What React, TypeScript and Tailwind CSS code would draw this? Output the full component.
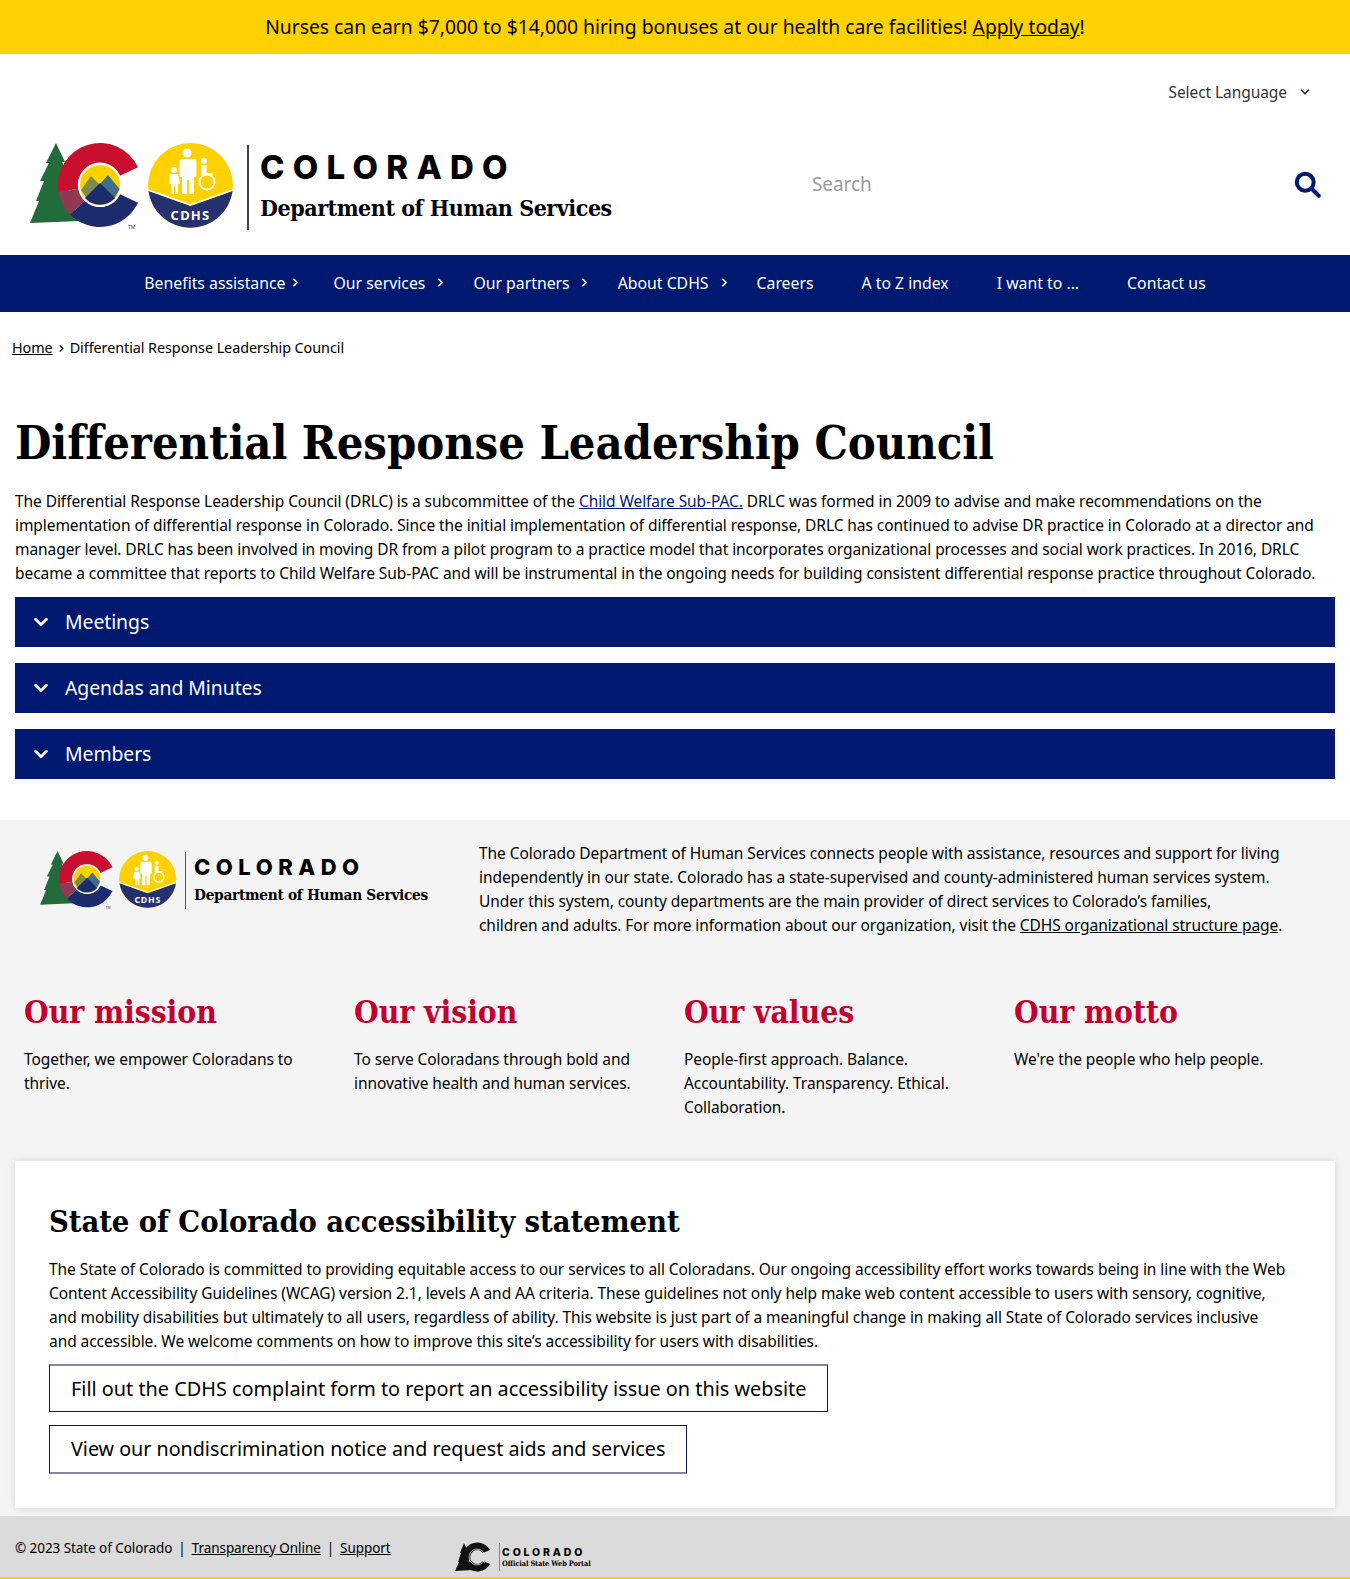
import React from "react";
import { ChevronDown, ChevronRight } from "lucide-react";

const slab = "font-['DejaVu_Serif',serif] [font-stretch:condensed]";

const Mark = ({ className }: { className: string }) => {
  return (
    <svg viewBox="0 0 204 88" className={className}>
      {/* tree */}
      <path d="M26 0 L35 19 L32 19 L40 36 L36 36 L42 60 L50 78 L0 80 L9 58 L6 58 L14 38 L10 38 L19 20 L16 20 Z" fill="#216c3a" />
      {/* C */}
      <path d="M108 24.2 A42 42 0 0 0 28.6 49.3 L48.3 45.8 A22 22 0 0 1 90 32.7 Z" fill="#c8102e" />
      <path d="M28.6 49.3 A42 42 0 0 0 40.3 71.7 L54.4 57.6 A22 22 0 0 1 48.3 45.8 Z" fill="#8f3a52" />
      <path d="M40.3 71.7 A42 42 0 0 0 108 59.8 L90 51.3 A22 22 0 0 1 54.4 57.6 Z" fill="#1c2b6e" />
      {/* mountains */}
      <circle cx="70" cy="42" r="22" fill="#ffffff" />
      <circle cx="70" cy="42" r="20" fill="#ffd100" />
      <path d="M51 47 L61 33 L71 43 L60 60 Z" fill="#7f8a4a" />
      <path d="M70 41 L78 32 L89.5 46 L84 56 Z" fill="#3f6f8d" />
      <path d="M55 55 L70 40 L85 55 A20 20 0 0 1 55 55 Z" fill="#1c2b6e" />
      <text x="98" y="86" fontSize="5" fontFamily="Liberation Sans" fill="#333">TM</text>
      {/* cdhs badge */}
      <circle cx="160.5" cy="42.5" r="42.5" fill="#ffd100" />
      <path d="M118.4 48 L160.5 63 L202.6 48 A42.5 42.5 0 0 1 118.4 48 Z" fill="#25306f" />
      <path d="M118.4 47 L160.5 62 L202.6 47" fill="none" stroke="#ffffff" strokeWidth="1.5" />
      <text x="160.5" y="77" textAnchor="middle" fontSize="13" fontWeight="700" letterSpacing="1.2" fontFamily="Noto Sans" fill="#fff">CDHS</text>
      <g fill="#ffffff">
        <circle cx="157" cy="10" r="4.5" />
        <path d="M150 16 h14 q2.5 0 2.5 3 v15 h-2.5 v17 h-5 v-14 h-2 v14 h-5 v-17 h-2.5 v-15 q0 -3 2.5 -3 Z" />
        <circle cx="144" cy="27" r="3" />
        <path d="M140 31 h8 l2 10 h-2 v10 h-2.5 v-8 h-1.5 v8 h-2.5 v-10 h-2.5 Z" />
        <circle cx="174" cy="18" r="3" />
        <path d="M171 22 h5.5 v8 h6 v2.5 h-11.5 Z" />
      </g>
      <circle cx="177" cy="39" r="7.5" fill="none" stroke="#ffffff" strokeWidth="1.8" />
    </svg>
  );
};

const PortalMark = () => {
  return (
    <svg viewBox="0 0 36 30" className="w-9 h-[30px] shrink-0">
      <path d="M9 1 L13 10 L13 20 L18 28 L0 29 L4 20 L3 20 L6 11 L5 11 Z" fill="#111" />
      <path d="M35 8 A14.5 14.5 0 1 0 35 22 L28 19 A7 7 0 1 1 28 11 Z" fill="#111" />
      <circle cx="22" cy="15" r="8" fill="none" stroke="#dbdbdb" strokeWidth="0.8" />
      <path d="M14 20 L20 11 L30 21 M16 12 L27 22" fill="none" stroke="#dbdbdb" strokeWidth="0.7" />
    </svg>
  );
};

const navItems = [
  { label: "Benefits assistance", arrow: "right-[7px]" },
  { label: "Our services", arrow: "right-[2px]" },
  { label: "Our partners", arrow: "right-[3px]" },
  { label: "About CDHS", arrow: "right-[2px]" },
  { label: "Careers", arrow: "" },
  { label: "A to Z index", arrow: "" },
  { label: "I want to ...", arrow: "" },
  { label: "Contact us", arrow: "" },
];

const values = [
  { title: "Our mission", text: "Together, we empower Coloradans to thrive." },
  { title: "Our vision", text: "To serve Coloradans through bold and innovative health and human services." },
  { title: "Our values", text: "People-first approach. Balance. Accountability. Transparency. Ethical. Collaboration." },
  { title: "Our motto", text: "We're the people who help people." },
];

const App = () => {
  return (
    <div className="w-[1350px] h-[1579px] overflow-hidden bg-white text-black text-[15.5px] tracking-[-0.07px] leading-6 font-['Noto_Sans',sans-serif]">
      {/* alert banner */}
      <div className="h-[54px] bg-[#ffd100] flex items-center justify-center text-[19.3px] tracking-normal">
        <span>
          Nurses can earn $7,000 to $14,000 hiring bonuses at our health care facilities! <a className="underline">Apply today</a>!
        </span>
      </div>

      {/* header */}
      <div className="h-[201px] flex flex-col">
        <div className="flex justify-end items-center pt-[26px] pr-[38px] text-[#333]">
          <span>Select Language</span>
          <ChevronDown size={14} strokeWidth={3} className="ml-[11px]" />
        </div>
        <div className="flex items-center justify-between pt-[39px] pl-[30px] pr-[29px]">
          <div className="flex items-center">
            <Mark className="w-[204px] h-[88px]" />
            <div className="w-[2px] h-[85px] bg-[#444] ml-[13px] mr-[11px]" />
            <div className="flex flex-col mb-[4px]">
              <span className="font-['Inter',sans-serif] font-extrabold text-[33px] leading-[38px] tracking-[0.25em]">COLORADO</span>
              <span className={`${slab} font-bold text-[23px] leading-[30px] mt-[7px] tracking-[-0.02em]`}>Department of Human Services</span>
            </div>
          </div>
          <div className="flex items-center justify-between w-[509px] mb-[6px]">
            <span className="text-[19px] text-[#999]">Search</span>
            <svg viewBox="0 0 24 24" className="w-[27px] h-[27px]" fill="none" stroke="#001970" strokeWidth="3.6" strokeLinecap="round">
              <circle cx="10" cy="10" r="7.5" />
              <path d="M16 16 L22 22" />
            </svg>
          </div>
        </div>
      </div>

      {/* main nav */}
      <nav className="h-[57px] pb-[2px] bg-[#001970] flex items-center justify-center text-white text-[15.8px] tracking-normal">
        {navItems.map((item) => (
          <div key={item.label} className="flex items-center px-6 relative">
            <span>{item.label}</span>
            {item.arrow && <ChevronRight size={13} strokeWidth={3} className={`absolute ${item.arrow}`} />}
          </div>
        ))}
      </nav>

      {/* breadcrumb */}
      <div className="pl-3 pt-[24px] text-[14.4px] flex items-center">
        <a className="underline">Home</a>
        <ChevronRight size={11} strokeWidth={2.5} className="mx-[3px]" />
        <span>Differential Response Leadership Council</span>
      </div>

      {/* content */}
      <div className="px-[15px]">
        <h1 className={`${slab} font-bold text-[46.7px] leading-[56px] mt-[55px] mb-[18px]`}>Differential Response Leadership Council</h1>
        <p className="mb-[12px]">
          The Differential Response Leadership Council (DRLC) is a subcommittee of the <a className="underline text-[#001970]">Child Welfare Sub-PAC.</a> DRLC was formed in 2009 to advise and make recommendations on the implementation of differential response in Colorado. Since the initial implementation of differential response, DRLC has continued to advise DR practice in Colorado at a director and manager level. DRLC has been involved in moving DR from a pilot program to a practice model that incorporates organizational processes and social work practices. In 2016, DRLC became a committee that reports to Child Welfare Sub-PAC and will be instrumental in the ongoing needs for building consistent differential response practice throughout Colorado.
        </p>
        <div className="flex flex-col gap-4">
          {["Meetings", "Agendas and Minutes", "Members"].map((title) => (
            <div key={title} className="h-[50px] bg-[#001970] text-white flex items-center pl-[15px] text-[19.4px]">
              <ChevronDown size={22} strokeWidth={3} className="mr-[13px]" />
              {title}
            </div>
          ))}
        </div>
      </div>

      {/* footer */}
      <div className="mt-[41px] bg-[#f4f4f4] h-[696px] flex flex-col">
        <div className="flex pt-[21px]">
          <div className="w-[479px] shrink-0 flex items-center pl-[40px] h-[68px] mt-[5px]">
            <Mark className="w-[137px] h-[59px]" />
            <div className="w-px h-[57px] bg-[#555] ml-[8px] mr-[8px]" />
            <div className="flex flex-col mb-[2px]">
              <span className="font-['Inter',sans-serif] font-extrabold text-[22px] leading-[26px] tracking-[0.25em]">COLORADO</span>
              <span className={`${slab} font-bold text-[15.3px] leading-[20px] mt-[5px] tracking-[-0.02em]`}>Department of Human Services</span>
            </div>
          </div>
          <p className="w-[806px]">
            The Colorado Department of Human Services connects people with assistance, resources and support for living independently in our state. Colorado has a state-supervised and county-administered human services system. Under this system, county departments are the main provider of direct services to Colorado’s families,<br />children and adults. For more information about our organization, visit the <a className="underline">CDHS organizational structure page</a>.
          </p>
        </div>

        <div className="grid grid-cols-[repeat(4,330px)] px-[24px] mt-[57px]">
          {values.map((v) => (
            <div key={v.title} className="pr-[30px]">
              <h2 className={`${slab} font-bold text-[31.6px] leading-[36px] text-[#c4002f] mb-[17px]`}>{v.title}</h2>
              <p>{v.text}</p>
            </div>
          ))}
        </div>

        <div className="mt-[42px] mx-[15px] h-[347px] bg-white shadow-[0_0_8px_rgba(0,0,0,0.12)] px-[34px] pt-[40px]">
          <h2 className={`${slab} font-bold text-[30.6px] leading-[40px] mb-[16px]`}>State of Colorado accessibility statement</h2>
          <p className="mb-[11px] w-[1239px]">
            The State of Colorado is committed to providing equitable access to our services to all Coloradans. Our ongoing accessibility effort works towards being in line with the Web Content Accessibility Guidelines (WCAG) version 2.1, levels A and AA criteria. These guidelines not only help make web content accessible to users with sensory, cognitive, and mobility disabilities but ultimately to all users, regardless of ability. This website is just part of a meaningful change in making all State of Colorado services inclusive and accessible. We welcome comments on how to improve this site’s accessibility for users with disabilities.
          </p>
          <div className="flex flex-col items-start gap-[13px] tracking-normal">
            <a className="h-[48px] flex items-center px-[21px] border border-[#14145a] border-t-2 border-t-[#8884a8] text-[19.85px]">Fill out the CDHS complaint form to report an accessibility issue on this website</a>
            <a className="h-[49px] flex items-center px-[21px] border border-[#14145a] border-b-2 border-b-[#8884a8] text-[19.7px]">View our nondiscrimination notice and request aids and services</a>
          </div>
        </div>
      </div>

      {/* bottom bar */}
      <div className="h-[63px] bg-[#dbdbdb] border-b-2 border-[#ffd100] flex items-start pl-[15px] text-[13.5px]">
        <div className="pt-[20px] flex w-[440px]">
          <span>© 2023 State of Colorado</span>
          <span className="mx-[6px]">|</span>
          <a className="underline">Transparency Online</a>
          <span className="mx-[6px]">|</span>
          <a className="underline">Support</a>
        </div>
        <div className="flex items-center pt-[26px]">
          <PortalMark />
          <div className="w-px h-[28px] bg-[#888] ml-[8px] mr-[2px]" />
          <div className="flex flex-col">
            <span className="font-['Inter',sans-serif] font-extrabold text-[10.5px] leading-[13px] tracking-[0.27em]">COLORADO</span>
            <span className={`${slab} font-bold text-[7.4px] leading-[10px] tracking-[-0.02em]`}>Official State Web Portal</span>
          </div>
        </div>
      </div>
    </div>
  );
};

export default App;
